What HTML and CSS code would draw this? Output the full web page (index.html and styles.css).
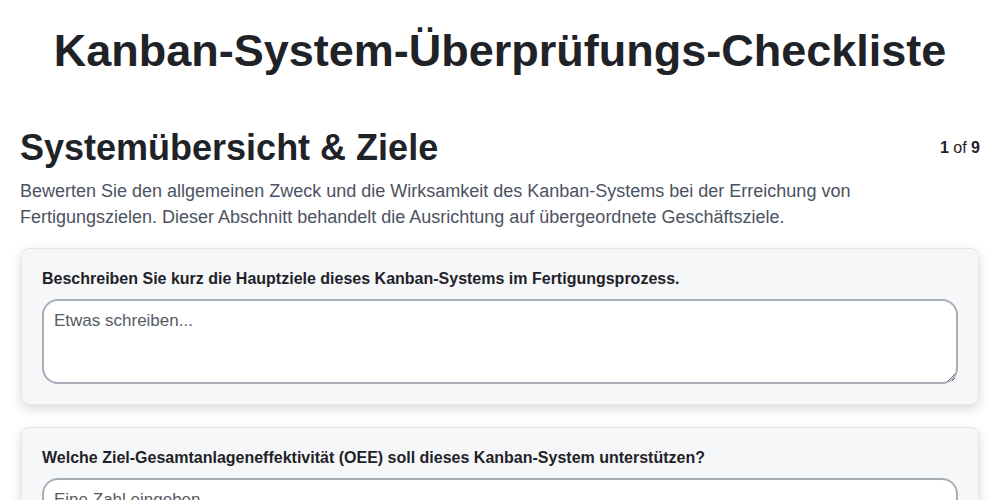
FILE: index.html
```html
<!DOCTYPE html>
<html lang="de">
<head>
<meta charset="utf-8">
<link rel="stylesheet" href="styles.css">
</head>
<body>
<main class="page">
  <h1 class="title">Kanban-System-Überprüfungs-Checkliste</h1>
  <section class="section">
    <div class="section-head">
      <h2 class="section-title">Systemübersicht &amp; Ziele</h2>
      <div class="pager"><b>1</b> of <b>9</b></div>
    </div>
    <p class="section-desc">Bewerten Sie den allgemeinen Zweck und die Wirksamkeit des Kanban-Systems bei der Erreichung von Fertigungszielen. Dieser Abschnitt behandelt die Ausrichtung auf übergeordnete Geschäftsziele.</p>
    <div class="card">
      <label class="q-label">Beschreiben Sie kurz die Hauptziele dieses Kanban-Systems im Fertigungsprozess.</label>
      <textarea class="field area" placeholder="Etwas schreiben..."></textarea>
    </div>
    <div class="card">
      <label class="q-label">Welche Ziel-Gesamtanlageneffektivität (OEE) soll dieses Kanban-System unterstützen?</label>
      <input class="field" type="text" placeholder="Eine Zahl eingeben">
    </div>
  </section>
</main>
</body>
</html>
```
FILE: styles.css
```css
* { box-sizing: border-box; }
html, body { margin: 0; padding: 0; background: #fff; }
body {
  font-family: "Liberation Sans", Arial, sans-serif;
  color: #1f2328;
}
.page { padding: 0 20px; }
.title {
  margin: 0;
  padding-top: 24px;
  text-align: center;
  font-size: 45px;
  line-height: 54px;
  font-weight: 700;
  color: #1f2328;
}
.section { margin-top: 48px; }
.section-head {
  display: flex;
  justify-content: space-between;
  align-items: center;
}
.section-title {
  margin: 0;
  font-size: 36px;
  line-height: 44px;
  font-weight: 700;
}
.pager { font-size: 16px; color: #1f2328; }
.section-desc {
  margin: 8px 0 18px;
  font-size: 18px;
  line-height: 26px;
  color: #4b5261;
}
.card {
  background: #f6f7f9;
  border: 1px solid #e4e6ea;
  border-radius: 8px;
  box-shadow: 0 4px 12px rgba(0,0,0,0.14);
  padding: 20px;
  margin: 0 1px 22px;
  display: flex;
  flex-direction: column;
}
.q-label {
  font-size: 16px;
  line-height: 20px;
  font-weight: 700;
  color: #1f2328;
  margin-bottom: 10px;
}
.field {
  font-family: "Liberation Sans", Arial, sans-serif;
  font-size: 17px;
  color: #1f2328;
  background: #fff;
  border: 2px solid #a8aeb6;
  border-radius: 16px;
  padding: 10px;
  width: 100%;
  outline: none;
}
.field::placeholder { color: #555b66; }
.area { height: 85px; resize: vertical; display: block; }
```
